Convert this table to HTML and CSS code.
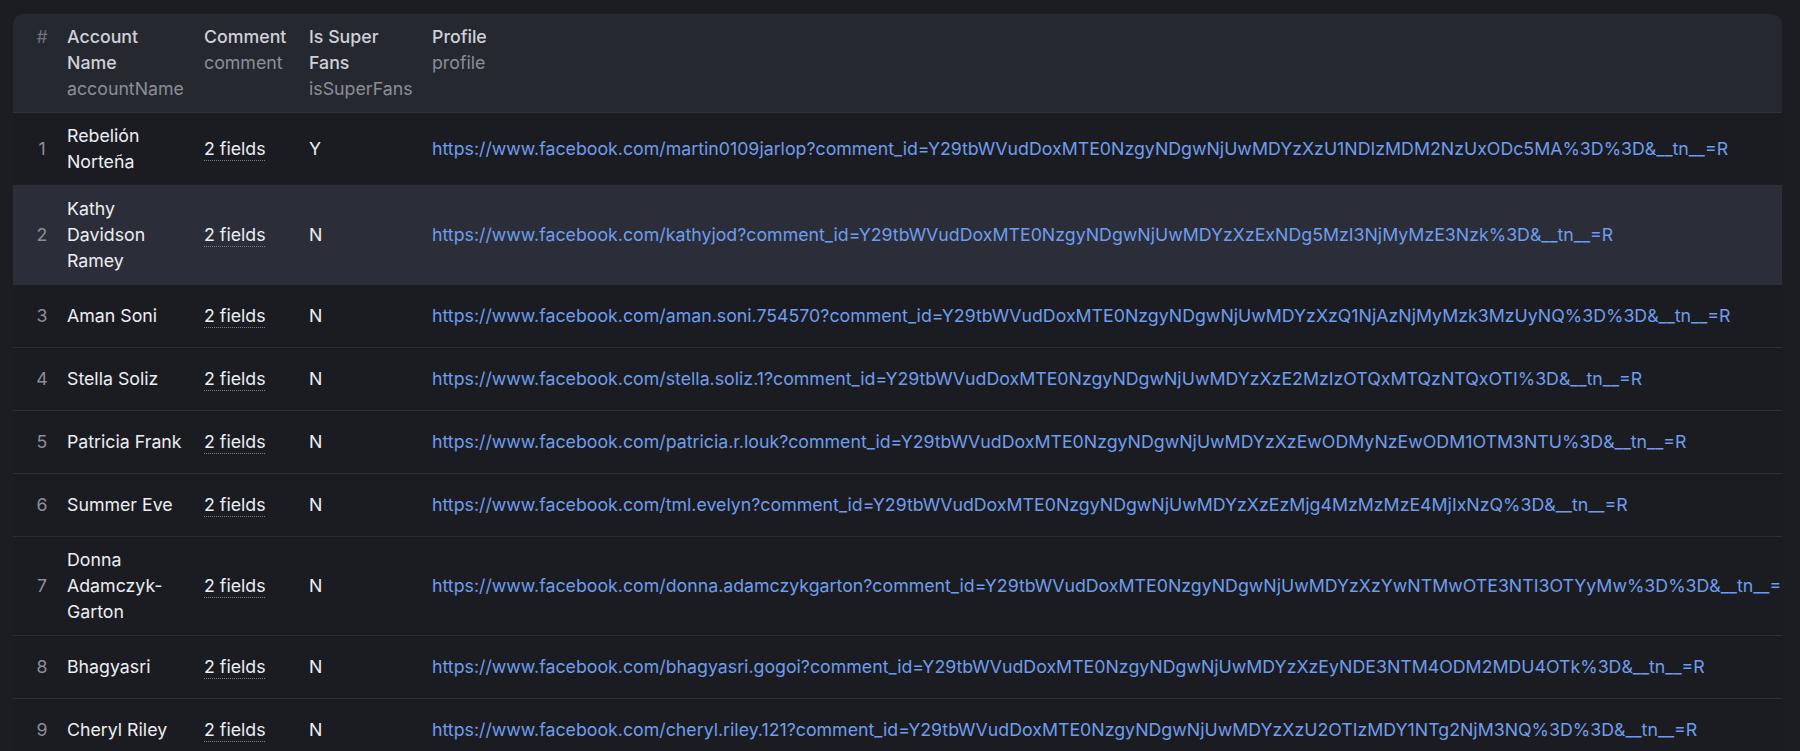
FILE: index.html
```html
<!DOCTYPE html>
<html lang="en">
<head>
<meta charset="utf-8">
<title>Dataset</title>
<link rel="stylesheet" href="styles.css">
</head>
<body>
<div class="page">
  <div class="grid-wrap">
    <table class="grid">
      <colgroup>
        <col class="c-num">
        <col class="c-name">
        <col class="c-comment">
        <col class="c-super">
        <col class="c-profile">
      </colgroup>
      <thead>
        <tr>
          <th class="num">#</th>
          <th><span class="lbl">Account Name</span><span class="key">accountName</span></th>
          <th><span class="lbl">Comment</span><span class="key">comment</span></th>
          <th><span class="lbl">Is Super Fans</span><span class="key">isSuperFans</span></th>
          <th><span class="lbl">Profile</span><span class="key">profile</span></th>
        </tr>
      </thead>
      <tbody>
        <tr>
          <td class="num">1</td>
          <td>Rebelión Norteña</td>
          <td><span class="fields">2 fields</span></td>
          <td>Y</td>
          <td class="url"><a href="#">https://www.facebook.com/martin0109jarlop?comment_id=Y29tbWVudDoxMTE0NzgyNDgwNjUwMDYzXzU1NDIzMDM2NzUxODc5MA%3D%3D&amp;__tn__=R</a></td>
        </tr>
        <tr class="hover">
          <td class="num">2</td>
          <td>Kathy Davidson Ramey</td>
          <td><span class="fields">2 fields</span></td>
          <td>N</td>
          <td class="url"><a href="#">https://www.facebook.com/kathyjod?comment_id=Y29tbWVudDoxMTE0NzgyNDgwNjUwMDYzXzExNDg5MzI3NjMyMzE3Nzk%3D&amp;__tn__=R</a></td>
        </tr>
        <tr>
          <td class="num">3</td>
          <td>Aman Soni</td>
          <td><span class="fields">2 fields</span></td>
          <td>N</td>
          <td class="url"><a href="#">https://www.facebook.com/aman.soni.754570?comment_id=Y29tbWVudDoxMTE0NzgyNDgwNjUwMDYzXzQ1NjAzNjMyMzk3MzUyNQ%3D%3D&amp;__tn__=R</a></td>
        </tr>
        <tr>
          <td class="num">4</td>
          <td>Stella Soliz</td>
          <td><span class="fields">2 fields</span></td>
          <td>N</td>
          <td class="url"><a href="#">https://www.facebook.com/stella.soliz.1?comment_id=Y29tbWVudDoxMTE0NzgyNDgwNjUwMDYzXzE2MzIzOTQxMTQzNTQxOTI%3D&amp;__tn__=R</a></td>
        </tr>
        <tr>
          <td class="num">5</td>
          <td>Patricia Frank</td>
          <td><span class="fields">2 fields</span></td>
          <td>N</td>
          <td class="url"><a href="#">https://www.facebook.com/patricia.r.louk?comment_id=Y29tbWVudDoxMTE0NzgyNDgwNjUwMDYzXzEwODMyNzEwODM1OTM3NTU%3D&amp;__tn__=R</a></td>
        </tr>
        <tr>
          <td class="num">6</td>
          <td>Summer Eve</td>
          <td><span class="fields">2 fields</span></td>
          <td>N</td>
          <td class="url"><a href="#">https://www.facebook.com/tml.evelyn?comment_id=Y29tbWVudDoxMTE0NzgyNDgwNjUwMDYzXzEzMjg4MzMzMzE4MjIxNzQ%3D&amp;__tn__=R</a></td>
        </tr>
        <tr>
          <td class="num">7</td>
          <td>Donna Adamczyk-Garton</td>
          <td><span class="fields">2 fields</span></td>
          <td>N</td>
          <td class="url"><a href="#">https://www.facebook.com/donna.adamczykgarton?comment_id=Y29tbWVudDoxMTE0NzgyNDgwNjUwMDYzXzYwNTMwOTE3NTI3OTYyMw%3D%3D&amp;__tn__=R</a></td>
        </tr>
        <tr>
          <td class="num">8</td>
          <td>Bhagyasri</td>
          <td><span class="fields">2 fields</span></td>
          <td>N</td>
          <td class="url"><a href="#">https://www.facebook.com/bhagyasri.gogoi?comment_id=Y29tbWVudDoxMTE0NzgyNDgwNjUwMDYzXzEyNDE3NTM4ODM2MDU4OTk%3D&amp;__tn__=R</a></td>
        </tr>
        <tr>
          <td class="num">9</td>
          <td>Cheryl Riley</td>
          <td><span class="fields">2 fields</span></td>
          <td>N</td>
          <td class="url"><a href="#">https://www.facebook.com/cheryl.riley.121?comment_id=Y29tbWVudDoxMTE0NzgyNDgwNjUwMDYzXzU2OTIzMDY1NTg2NjM3NQ%3D%3D&amp;__tn__=R</a></td>
        </tr>
      </tbody>
    </table>
  </div>
</div>
</body>
</html>
```

FILE: styles.css
```css
html, body {
  margin: 0;
  padding: 0;
  background: #1c1d22;
  height: 100%;
  overflow: hidden;
}

body {
  font-family: Inter, "Noto Sans", "Liberation Sans", sans-serif;
  font-size: 17.75px;
  line-height: 26px;
  color: #eceef2;
}

.page {
  padding: 14px 18px 0 13px;
}

.grid-wrap {
  background: #1b1c21;
  border-radius: 10px 10px 0 0;
  overflow: hidden;
}

.grid {
  border-collapse: collapse;
  table-layout: fixed;
  width: 1900px;
}

.c-num { width: 46px; }
.c-name { width: 137px; }
.c-comment { width: 105px; }
.c-super { width: 123px; }
.c-profile { width: 1489px; }

.grid th {
  background: #262830;
  text-align: left;
  vertical-align: top;
  padding: 10px 8px 10px 8px;
  font-weight: 500;
  border-bottom: 1px solid #30323b;
}

.grid th .lbl {
  display: block;
  color: #cfd1d8;
}

.grid th .key {
  display: block;
  color: #8b8e98;
  font-weight: 400;
}

.grid th.num {
  color: #6f727c;
  font-weight: 400;
}

.grid .num {
  text-align: center;
  padding-left: 20px;
  padding-right: 8px;
}

.grid td {
  padding: 10px 8px;
  vertical-align: middle;
  border-bottom: 1px solid #2c2e36;
  white-space: normal;
}

.grid td.num {
  color: #8b8e98;
}

.grid td.url {
  white-space: nowrap;
}

.grid tr.hover td {
  background: #2b2e38;
}

.fields {
  display: inline-block;
  padding: 8px 0;
  text-decoration: underline dotted #7a7d88;
  text-underline-offset: 5px;
  text-decoration-thickness: 1px;
  white-space: nowrap;
}

.url a {
  color: #6f9ded;
  text-decoration: none;
}
```
